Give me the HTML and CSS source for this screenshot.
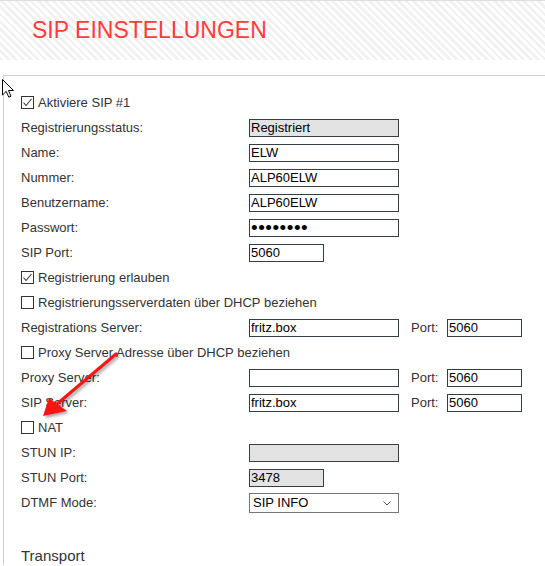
FILE: index.html
```html
<!DOCTYPE html>
<html lang="de">
<head>
<meta charset="utf-8">
<title>SIP Einstellungen</title>
<link rel="stylesheet" href="styles.css">
</head>
<body>
<header class="head">
  <h1 class="title">SIP EINSTELLUNGEN</h1>
</header>
<section class="panel">
  <div class="row"><label class="check"><span class="cb on"><svg viewBox="0 0 13 13" width="13" height="13"><path d="M2.5 6.5 L5 9.5 L10.5 3" fill="none" stroke="#333" stroke-width="1.1"/></svg></span>Aktiviere SIP #1</label></div>
  <div class="row"><span class="lbl">Registrierungsstatus:</span><input class="in wide ro" type="text" value="Registriert" readonly></div>
  <div class="row"><span class="lbl">Name:</span><input class="in wide" type="text" value="ELW"></div>
  <div class="row"><span class="lbl">Nummer:</span><input class="in wide" type="text" value="ALP60ELW"></div>
  <div class="row"><span class="lbl">Benutzername:</span><input class="in wide" type="text" value="ALP60ELW"></div>
  <div class="row"><span class="lbl">Passwort:</span><input class="in wide pw" type="password" value="12345678"></div>
  <div class="row"><span class="lbl">SIP Port:</span><input class="in short" type="text" value="5060"></div>
  <div class="row"><label class="check"><span class="cb on"><svg viewBox="0 0 13 13" width="13" height="13"><path d="M2.5 6.5 L5 9.5 L10.5 3" fill="none" stroke="#333" stroke-width="1.1"/></svg></span>Registrierung erlauben</label></div>
  <div class="row"><label class="check"><span class="cb"></span>Registrierungsserverdaten über DHCP beziehen</label></div>
  <div class="row"><span class="lbl">Registrations Server:</span><input class="in wide" type="text" value="fritz.box"><span class="port">Port:</span><input class="in short" type="text" value="5060"></div>
  <div class="row"><label class="check"><span class="cb"></span>Proxy Server Adresse über DHCP beziehen</label></div>
  <div class="row"><span class="lbl">Proxy Server:</span><input class="in wide" type="text" value=""><span class="port">Port:</span><input class="in short" type="text" value="5060"></div>
  <div class="row"><span class="lbl">SIP Server:</span><input class="in wide" type="text" value="fritz.box"><span class="port">Port:</span><input class="in short" type="text" value="5060"></div>
  <div class="row"><label class="check"><span class="cb"></span>NAT</label></div>
  <div class="row"><span class="lbl">STUN IP:</span><input class="in wide ro" type="text" value="" readonly></div>
  <div class="row"><span class="lbl">STUN Port:</span><input class="in short ro" type="text" value="3478" readonly></div>
  <div class="row"><span class="lbl">DTMF Mode:</span><span class="selwrap"><select class="sel"><option>SIP INFO</option><option>RFC 2833</option><option>Inband</option></select><svg class="chev" viewBox="0 0 8 5" width="8" height="5"><path d="M0.5 0.5 L4 4 L7.5 0.5" fill="none" stroke="#555" stroke-width="1"/></svg></span></div>
  <h2 class="sub">Transport</h2>
</section>
<svg class="arrow" width="130" height="80" viewBox="30 345 130 80">
  <g class="arrow-g">
    <line x1="116" y1="354" x2="57" y2="404" stroke="#ff1414" stroke-width="3.2" stroke-linecap="round"/>
    <polygon points="43,416 49,398 67,411" fill="#ff1414"/>
  </g>
</svg>
<svg class="cursor" width="14" height="20" viewBox="0 0 14 20">
  <path d="M0.5 0.5 L0.5 16 L4.2 12.4 L6.8 18.2 L9 17.2 L6.5 11.5 L11.5 11.5 Z" fill="#fff" stroke="#000" stroke-width="1" stroke-linejoin="miter"/>
</svg>
</body>
</html>
```
FILE: styles.css
```css
html, body {
  margin: 0;
  padding: 0;
  background: #fff;
}
body {
  font-family: "Liberation Sans", Arial, sans-serif;
  color: #333;
  position: relative;
  overflow: hidden;
  height: 566px;
}
.head {
  border-top: 1px solid #dedede;
  height: 59px;
  background: repeating-linear-gradient(45deg, #f1f1f1 0 2.6px, #ffffff 2.6px 5.2px);
}
.title {
  margin: 0;
  padding-left: 32px;
  font-size: 23px;
  font-weight: normal;
  line-height: 59px;
  color: #ff3b3b;
  letter-spacing: 0;
}
.panel {
  margin: 15px 0 0 3px;
  border-top: 1px solid #cfcfcf;
  border-left: 1px solid #cfcfcf;
  padding: 14px 0 0 17px;
}
.row {
  display: flex;
  align-items: center;
  height: 25px;
  font-size: 13px;
}
.lbl {
  width: 228px;
  flex: none;
  white-space: nowrap;
}
.check {
  display: flex;
  align-items: center;
  gap: 4px;
  white-space: nowrap;
}
.cb {
  display: inline-block;
  width: 13px;
  height: 13px;
  box-sizing: border-box;
  border: 1px solid #333;
  background: #fff;
  position: relative;
  flex: none;
}
.cb svg {
  display: block;
  margin: -1px 0 0 -1px;
}
.in {
  box-sizing: border-box;
  height: 18px;
  border: 1px solid #353d45;
  border-radius: 0;
  padding: 0 1px;
  margin: 0;
  font-family: "Liberation Sans", Arial, sans-serif;
  font-size: 13px;
  color: #000;
  background: #fff;
  outline: none;
  flex: none;
}
.wide { width: 150px; }
.short { width: 75px; }
.ro { background: #e3e3e3; }
.pw {
  font-size: 19px;
  letter-spacing: 0.5px;
  line-height: 16px;
}
.port {
  width: 36px;
  margin-left: 12px;
  flex: none;
}
.selwrap {
  position: relative;
  display: inline-block;
  flex: none;
  height: 20px;
}
.sel {
  -webkit-appearance: none;
  appearance: none;
  box-sizing: border-box;
  width: 150px;
  height: 20px;
  border: 1px solid #767676;
  border-radius: 0;
  background: #fff;
  padding: 0 3px;
  margin: 0;
  font-family: "Liberation Sans", Arial, sans-serif;
  font-size: 13px;
  color: #000;
  outline: none;
}
.chev {
  position: absolute;
  right: 8px;
  top: 8px;
  pointer-events: none;
}
.sub {
  margin: 32px 0 0 0;
  font-size: 15px;
  font-weight: normal;
  color: #333;
  line-height: 18px;
}
.arrow {
  position: absolute;
  left: 30px;
  top: 345px;
  overflow: visible;
}
.arrow-g {
  filter: drop-shadow(2px 2px 1.5px rgba(0, 0, 0, 0.35));
}
.cursor {
  position: absolute;
  left: 2px;
  top: 79px;
}
```
